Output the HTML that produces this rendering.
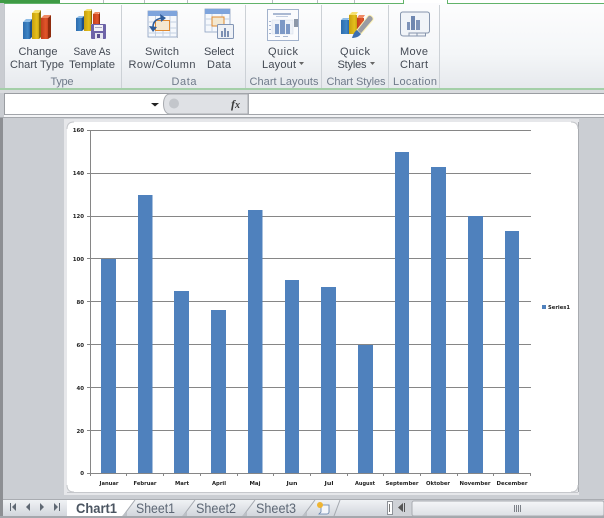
<!DOCTYPE html>
<html><head><meta charset="utf-8"><style>
html,body{margin:0;padding:0;width:604px;height:518px;overflow:hidden;background:#cbced3}
svg{display:block;position:absolute;left:0;top:0}
.r{font:11px "Liberation Sans",sans-serif;fill:#444a54;text-anchor:middle}
.g{font:11px "Liberation Sans",sans-serif;fill:#6f7a8a;text-anchor:middle}
.a{font:bold 5.4px "DejaVu Sans",sans-serif;fill:#222;text-anchor:middle}
.y{font:bold 5.4px "DejaVu Sans",sans-serif;fill:#222;text-anchor:end}
.t{font:14px "Liberation Sans",sans-serif;fill:#5d6775}
</style></head><body>
<svg width="604" height="518" viewBox="0 0 604 518" xmlns="http://www.w3.org/2000/svg">
<defs>
<linearGradient id="rb" x1="0" y1="0" x2="0" y2="1"><stop offset="0" stop-color="#fdfdfe"/><stop offset=".6" stop-color="#f4f6f8"/><stop offset="1" stop-color="#e6e9ed"/></linearGradient>
<linearGradient id="bl" x1="0" y1="0" x2="1" y2="0"><stop offset="0" stop-color="#2d6cae"/><stop offset=".7" stop-color="#3f86c6"/><stop offset="1" stop-color="#2a66a6"/></linearGradient>
<linearGradient id="ye" x1="0" y1="0" x2="1" y2="0"><stop offset="0" stop-color="#c79f10"/><stop offset=".7" stop-color="#e5c01c"/><stop offset="1" stop-color="#c8a212"/></linearGradient>
<linearGradient id="re" x1="0" y1="0" x2="1" y2="0"><stop offset="0" stop-color="#c23f1c"/><stop offset=".7" stop-color="#e2552a"/><stop offset="1" stop-color="#c8431e"/></linearGradient>
<linearGradient id="tb" x1="0" y1="0" x2="0" y2="1"><stop offset="0" stop-color="#f0f2f5"/><stop offset="1" stop-color="#d2d6dc"/></linearGradient>
<linearGradient id="th" x1="0" y1="0" x2="0" y2="1"><stop offset="0" stop-color="#f5f6f8"/><stop offset="1" stop-color="#dde0e5"/></linearGradient>
</defs>

<!-- ribbon body -->
<rect x="0" y="0" width="604" height="89" fill="url(#rb)"/>
<rect x="0" y="0" width="4" height="118" fill="#c9ccd1"/>
<rect x="4" y="4" width="1" height="85" fill="#c4c8cd"/>
<!-- ribbon top strip -->
<rect x="4" y="0" width="600" height="3" fill="#fff"/>
<rect x="0" y="0" width="60" height="3" fill="#3f9b45"/>
<g fill="#b8bcc2"><rect x="103" y="0" width="1" height="3"/><rect x="144" y="0" width="1" height="3"/><rect x="187" y="0" width="1" height="3"/><rect x="272" y="0" width="1" height="3"/><rect x="317" y="0" width="1" height="3"/><rect x="354" y="0" width="1" height="3"/></g>
<rect x="4" y="3" width="399" height="1" fill="#62b36a"/>
<rect x="403" y="0" width="1" height="4" fill="#62b36a"/>
<rect x="447" y="0" width="1" height="4" fill="#62b36a"/>
<rect x="447" y="3" width="157" height="1" fill="#62b36a"/>

<g fill="#ccd1d6"><rect x="121" y="5" width="1" height="84"/><rect x="245" y="5" width="1" height="84"/><rect x="321" y="5" width="1" height="84"/><rect x="388" y="5" width="1" height="84"/><rect x="439" y="5" width="1" height="84"/></g>
<rect x="0" y="88" width="604" height="2" fill="#a4cfa8"/>
<rect x="0" y="90" width="604" height="3" fill="#d9dbde"/>

<!-- icon: change chart type -->
<path d="M23 22l3-3h6l-2 3z" fill="#8fbde6"/><rect x="23" y="22" width="7" height="17" fill="url(#bl)"/><path d="M30 22l2-3v18l-2 2z" fill="#1c4f88"/>
<path d="M32 13l3-3h6l-2 3z" fill="#f5e070"/><rect x="32" y="13" width="7" height="26" fill="url(#ye)"/><path d="M39 13l2-3v27l-2 2z" fill="#8a6c08"/>
<path d="M41 18l3-3h7l-3 3z" fill="#ef8a64"/><rect x="41" y="18" width="7" height="21" fill="url(#re)"/><path d="M48 18l3-3v22l-3 2z" fill="#8f2c0e"/>

<!-- icon: save as template -->
<path d="M76 18l3-2h5l-2 2z" fill="#8fbde6"/><rect x="76" y="18" width="6" height="13" fill="url(#bl)"/><path d="M82 18l2-2v13l-2 2z" fill="#1c4f88"/>
<path d="M84 11l3-2h5l-2 2z" fill="#f5e070"/><rect x="84" y="11" width="7" height="20" fill="url(#ye)"/><path d="M91 11l1-2v15h-1z" fill="#8a6c08"/>
<path d="M93 14l2-2h5l-2 2z" fill="#ef8a64"/><rect x="93" y="14" width="6" height="10" fill="url(#re)"/><path d="M99 14l1-2v12h-1z" fill="#8f2c0e"/>
<rect x="91" y="24" width="15" height="15" rx="1" fill="#6d63a8"/><rect x="94" y="25" width="9" height="6" fill="#f2f2f6"/><rect x="95" y="27" width="7" height="1" fill="#a8a8c0"/><rect x="95" y="33" width="8" height="6" fill="#e5e5ee"/><rect x="97" y="34" width="3" height="4" fill="#5a5190"/>

<!-- icon: switch row/column -->
<rect x="148" y="11" width="29" height="26" fill="#f5f8fc" stroke="#8a9fc0" stroke-width=".8"/>
<rect x="148" y="11" width="29" height="5" fill="#7ea4dc"/>
<g stroke="#c3d0e2" stroke-width="1"><path d="M148 22h29M148 28h29M148 33h29M155.500 16v21M163 16v21M170 16v21"/></g>
<rect x="155.500" y="20.500" width="14" height="10" fill="#f4e8d0" stroke="#e08a30"/>
<rect x="177" y="12" width="1" height="26" fill="#b8bfca"/>
<path d="M153 27c0-5 3-8 9-9" fill="none" stroke="#2f5d9a" stroke-width="1.600"/><path d="M160 14l6 4-5 4z" fill="#2f5d9a"/><path d="M149 26l8 1-4 5z" fill="#2f5d9a"/>

<!-- icon: select data -->
<rect x="205" y="9" width="25" height="23" fill="#f5f8fc" stroke="#8a9fc0" stroke-width=".8"/>
<rect x="205" y="9" width="25" height="5" fill="#7ea4dc"/>
<g stroke="#c3d0e2" stroke-width="1"><path d="M205 19h25M205 25h25M212 14v18M222 14v18"/></g>
<rect x="212" y="17" width="12" height="9" fill="#f4e8d0" stroke="#e08a30"/>
<rect x="217.500" y="24.500" width="16" height="14" rx="1" fill="#eef1f6" stroke="#8295b5"/>
<g fill="#7c90b4"><rect x="221" y="31" width="2" height="6"/><rect x="224" y="28" width="2" height="9"/><rect x="227" y="31" width="2" height="6"/></g>

<!-- icon: quick layout -->
<rect x="267.500" y="9.500" width="31" height="31" fill="#fafbfd" stroke="#a2b2cc"/>
<rect x="273" y="13" width="18" height="2" fill="#a9b8d2"/><rect x="276" y="16" width="12" height="1" fill="#c2cde0"/>
<rect x="272" y="20" width="21" height="14" fill="#eef2f8" stroke="#d2dbe8" stroke-width=".5"/>
<g fill="#7d99c6"><rect x="275" y="24" width="4" height="10"/><rect x="280" y="20" width="5" height="14"/><rect x="286" y="24" width="4" height="10"/></g>
<rect x="294" y="19" width="4" height="8" fill="#8c97a8"/>
<g fill="#a9b8d2"><rect x="269" y="21" width="2" height="1"/><rect x="269" y="25" width="2" height="1"/><rect x="269" y="29" width="2" height="1"/><rect x="269" y="33" width="2" height="1"/><rect x="275" y="36" width="5" height="1"/><rect x="283" y="36" width="5" height="1"/></g>

<!-- icon: quick styles -->
<path d="M341 20l2-2h7l-2 2z" fill="#8fbde6"/><rect x="341" y="20" width="8" height="14" fill="url(#bl)"/>
<path d="M349 15l3-3h6l-2 3z" fill="#f5e070"/><rect x="349" y="15" width="8" height="19" fill="url(#ye)"/>
<path d="M357 18l2-3h6l-2 3z" fill="#ef8a64"/><rect x="357" y="18" width="7" height="12" fill="url(#re)"/>
<path d="M368 16l-11 14 4 4 12-14c1-3-3-6-5-4z" fill="#9a9ca3" stroke="#fff4b8" stroke-width="1"/>
<path d="M357 30l4 4c-2 3-6 4-9 4 1-3 2-6 5-8z" fill="#3d6fb2"/>

<!-- icon: move chart -->
<path d="M400.500 14c0-1 1-2 2-2h25c1 0 2 1 2 2v17c0 1-1 2-2 2h-2v3h-22c-2 0-3-1-3-3z" fill="#f1f4f8" stroke="#8695ad"/>
<path d="M409 36v-3h8v3M417 33h8" fill="none" stroke="#8695ad"/>
<g fill="#7e93b8"><rect x="407" y="22" width="3" height="8"/><rect x="411" y="16" width="4" height="14" fill="#6f87b0"/><rect x="416" y="20" width="4" height="10"/></g>

<!-- ribbon text -->
<text class="r" x="38" y="55" textLength="39">Change</text>
<text class="r" x="37" y="68" textLength="54">Chart Type</text>
<text class="r" x="92" y="55" textLength="37" lengthAdjust="spacingAndGlyphs">Save As</text>
<text class="r" x="92" y="68" textLength="46" lengthAdjust="spacingAndGlyphs">Template</text>
<text class="g" x="62" y="85" textLength="23">Type</text>
<text class="r" x="162" y="55" textLength="34">Switch</text>
<text class="r" x="162" y="68" textLength="67">Row/Column</text>
<text class="r" x="219" y="55" textLength="30">Select</text>
<text class="r" x="219" y="68" textLength="24">Data</text>
<text class="g" x="184" y="85" textLength="25">Data</text>
<text class="r" x="283" y="55" textLength="30">Quick</text>
<text class="r" x="279" y="68" textLength="34">Layout</text>
<path d="M299 62h5l-2.500 3z" fill="#666"/>
<text class="g" x="284" y="85" textLength="69">Chart Layouts</text>
<text class="r" x="355" y="55" textLength="30">Quick</text>
<text class="r" x="352" y="68" textLength="29">Styles</text>
<path d="M370 62h5l-2.500 3z" fill="#666"/>
<text class="g" x="356" y="85" textLength="59">Chart Styles</text>
<text class="r" x="414" y="55" textLength="28">Move</text>
<text class="r" x="414" y="68" textLength="28">Chart</text>
<text class="g" x="415" y="85" textLength="44">Location</text>

<!-- formula bar -->
<rect x="4" y="93" width="600" height="1" fill="#9a9da2"/>
<rect x="4" y="94" width="600" height="20" fill="#fff"/>
<rect x="4" y="114" width="600" height="1" fill="#a2a5aa"/>
<rect x="4" y="115" width="600" height="2" fill="#f4f5f7"/>
<rect x="4" y="93" width="1" height="22" fill="#9a9da2"/>
<rect x="0" y="117" width="604" height="1" fill="#a6a9ae"/>
<path d="M151 103h8l-4 3.500z" fill="#222"/>
<path d="M248 94h-78c-4 0-6.500 4-6.500 10s2.500 10 6.500 10h78z" fill="#dfe1e5" stroke="#a8abb0"/>
<circle cx="174" cy="103.500" r="5" fill="#c3c6cb"/>
<text x="231" y="108" style="font:italic bold 12px 'Liberation Serif',serif;fill:#3a3a3a">f<tspan font-size="10">x</tspan></text>
<rect x="248" y="94" width="1" height="20" fill="#a8abb0"/>
<g fill="#b5b8bc"><rect x="316" y="118" width="1" height="1"/><rect x="319" y="118" width="1" height="1"/><rect x="322" y="118" width="1" height="1"/><rect x="325" y="118" width="1" height="1"/></g>

<!-- main area -->
<rect x="0" y="118" width="604" height="382" fill="#cbced3"/>
<rect x="0" y="118" width="3" height="400" fill="#8d8f93"/>
<rect x="64" y="119" width="515" height="376" fill="#e6e7ea"/>
<rect x="67" y="122" width="511" height="370" rx="7" fill="#fff"/>
<rect x="578" y="122" width="1" height="370" fill="#a8abb0"/>
<rect x="67" y="492" width="511" height="1" fill="#c6c8cc"/>
<path d="M67 129q0-7 7-7" fill="none" stroke="#c4c6ca"/><path d="M571 122q7 0 7 7" fill="none" stroke="#c4c6ca"/><path d="M67 485q0 7 7 7" fill="none" stroke="#c4c6ca"/><path d="M578 485q0 7-7 7" fill="none" stroke="#c4c6ca"/>

<!-- chart gridlines -->
<g fill="#868686">
<rect x="87" y="130" width="444" height="1"/><rect x="87" y="173" width="444" height="1"/><rect x="87" y="216" width="444" height="1"/><rect x="87" y="258" width="444" height="1"/><rect x="87" y="301" width="444" height="1"/><rect x="87" y="344" width="444" height="1"/><rect x="87" y="387" width="444" height="1"/><rect x="87" y="430" width="444" height="1"/>
<rect x="87" y="473" width="444" height="1"/>
<rect x="90" y="130" width="1" height="343"/>
<rect x="90" y="473" width="1" height="3"/><rect x="126" y="473" width="1" height="3"/><rect x="163" y="473" width="1" height="3"/><rect x="200" y="473" width="1" height="3"/><rect x="237" y="473" width="1" height="3"/><rect x="273" y="473" width="1" height="3"/><rect x="310" y="473" width="1" height="3"/><rect x="347" y="473" width="1" height="3"/><rect x="383" y="473" width="1" height="3"/><rect x="420" y="473" width="1" height="3"/><rect x="457" y="473" width="1" height="3"/><rect x="493" y="473" width="1" height="3"/><rect x="530" y="473" width="1" height="3"/>
</g>
<!-- bars -->
<g fill="#4f81bd">
<rect x="101" y="259" width="15" height="214"/>
<rect x="138" y="195" width="14.500" height="278"/>
<rect x="174" y="291" width="15" height="182"/>
<rect x="211" y="310" width="15" height="163"/>
<rect x="248" y="210" width="14.500" height="263"/>
<rect x="285" y="280" width="14" height="193"/>
<rect x="321" y="287" width="15" height="186"/>
<rect x="358" y="345" width="15" height="128"/>
<rect x="395" y="152" width="14" height="321"/>
<rect x="431" y="167" width="15" height="306"/>
<rect x="468" y="216" width="15" height="257"/>
<rect x="505" y="231" width="14" height="242"/>
</g>
<!-- y labels -->
<text class="y" x="84" y="132">160</text><text class="y" x="84" y="175">140</text><text class="y" x="84" y="218">120</text><text class="y" x="84" y="261">100</text><text class="y" x="84" y="304">80</text><text class="y" x="84" y="347">60</text><text class="y" x="84" y="390">40</text><text class="y" x="84" y="433">20</text><text class="y" x="84" y="475">0</text>
<!-- x labels -->
<text class="a" x="109" y="485" textLength="19" lengthAdjust="spacingAndGlyphs">Januar</text>
<text class="a" x="145" y="485" textLength="23" lengthAdjust="spacingAndGlyphs">Februar</text>
<text class="a" x="182" y="485" textLength="14" lengthAdjust="spacingAndGlyphs">Mart</text>
<text class="a" x="219" y="485" textLength="14" lengthAdjust="spacingAndGlyphs">April</text>
<text class="a" x="255" y="485" textLength="11" lengthAdjust="spacingAndGlyphs">Maj</text>
<text class="a" x="292" y="485" textLength="11" lengthAdjust="spacingAndGlyphs">Jun</text>
<text class="a" x="329" y="485" textLength="9" lengthAdjust="spacingAndGlyphs">Jul</text>
<text class="a" x="365" y="485" textLength="20" lengthAdjust="spacingAndGlyphs">August</text>
<text class="a" x="402" y="485" textLength="33" lengthAdjust="spacingAndGlyphs">September</text>
<text class="a" x="438" y="485" textLength="24" lengthAdjust="spacingAndGlyphs">Oktober</text>
<text class="a" x="475" y="485" textLength="31" lengthAdjust="spacingAndGlyphs">November</text>
<text class="a" x="512" y="485" textLength="31" lengthAdjust="spacingAndGlyphs">December</text>
<!-- legend -->
<rect x="542" y="305" width="4" height="4" fill="#4f81bd"/>
<text x="548" y="309" textLength="22" lengthAdjust="spacingAndGlyphs" style="font:bold 5.4px 'DejaVu Sans',sans-serif;fill:#222">Series1</text>

<!-- tab bar -->
<rect x="3" y="500" width="601" height="16" fill="url(#tb)"/>
<rect x="0" y="516" width="604" height="2" fill="#a4a7ac"/>
<rect x="3" y="499" width="601" height="1" fill="#a9acb1"/>
<g fill="#5f6873">
<rect x="10" y="503" width="1" height="8"/><path d="M16 503v8l-4-4z"/>
<path d="M30 503v8l-4-4z"/>
<path d="M40 503v8l4-4z"/>
<path d="M54 503v8l4-4z"/><rect x="59" y="503" width="1" height="8"/>
</g>
<path d="M67 500h68l-12 16h-56z" fill="#fff"/>
<path d="M135 500l-12 16M195 500l-12 16M255 500l-12 16M315 500l-12 16" stroke="#a5a9af" fill="none"/>
<path d="M122 516l5-5v5zM182 516l5-5v5zM242 516l5-5v5zM302 516l5-5v5z" fill="#bcc0c6"/>
<text x="76" y="513" textLength="41" lengthAdjust="spacingAndGlyphs" style="font:bold 14px 'Liberation Sans',sans-serif;fill:#4b5561">Chart1</text>
<text class="t" x="136" y="513" textLength="39" lengthAdjust="spacingAndGlyphs">Sheet1</text>
<text class="t" x="196" y="513" textLength="40" lengthAdjust="spacingAndGlyphs">Sheet2</text>
<text class="t" x="256" y="513" textLength="40" lengthAdjust="spacingAndGlyphs">Sheet3</text>
<!-- new sheet icon -->
<path d="M321 505h8v7c0 1-1 2-2 2h-8l2-2z" fill="#f4f6fa" stroke="#5f7ea8" stroke-width=".8"/>
<circle cx="320" cy="505" r="3" fill="#eeb432"/>
<path d="M340 500l-6 16" stroke="#a5a9af" fill="none"/>
<!-- split + scrollbar -->
<rect x="387.500" y="501.500" width="5" height="13" fill="#fff" stroke="#8e9298"/>
<rect x="389" y="504" width="1" height="8" fill="#777"/>
<rect x="393" y="500" width="211" height="16" fill="#cfd2d7"/>
<path d="M403 503v9l-5-4.500z" fill="#555"/>
<rect x="404" y="503" width="1" height="9" fill="#555"/>
<rect x="412" y="501" width="192" height="15" rx="2" fill="url(#th)" stroke="#a9acb1"/>
<g fill="#7c8087"><rect x="514" y="505" width="1" height="7"/><rect x="516" y="505" width="1" height="7"/><rect x="518" y="505" width="1" height="7"/><rect x="520" y="505" width="1" height="7"/></g>
</svg>
</body></html>
